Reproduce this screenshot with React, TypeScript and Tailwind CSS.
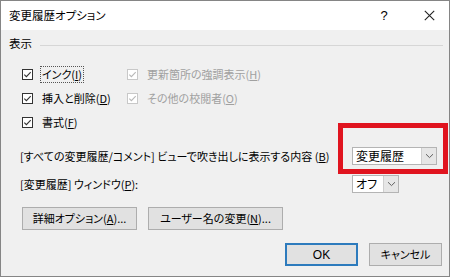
import React from "react";

function Check({ disabled }: { disabled?: boolean }) {
  const border = disabled ? "#c8c8c8" : "#333333";
  const mark = disabled ? "#b8b8b8" : "#333333";
  return (
    <svg width="11" height="11" viewBox="0 0 11 11" className="shrink-0">
      <rect x="0.5" y="0.5" width="10" height="10" fill="#ffffff" stroke={border} />
      <path d="M2.3 5.6 L4.4 7.7 L8.7 3.2" fill="none" stroke={mark} strokeWidth="1.1" />
    </svg>
  );
}

function Chevron() {
  return (
    <svg width="9" height="6" viewBox="0 0 9 6">
      <path d="M1 1.2 L4.5 4.6 L8 1.2" fill="none" stroke="#606060" strokeWidth="1" />
    </svg>
  );
}

function Combo({ text, width }: { text: string; width: string }) {
  return (
    <div className={`${width} h-[18px] bg-white border border-[#b4b4b4] flex items-center`}>
      <span className="pl-[3px] leading-none text-[12px]">{text}</span>
      <div className="ml-auto w-[15px] h-[16px] bg-[#e6e6e6] border-l border-[#cfcfcf] flex items-center justify-center">
        <Chevron />
      </div>
    </div>
  );
}

export default function App() {
  return (
    <div className="w-[451px] h-[278px] bg-white font-['Noto_Sans_CJK_JP',sans-serif] [font-feature-settings:'palt'] text-[11px] text-black">
      <div className="relative w-[450px] h-[277px] border border-[#858585] bg-[#f0f0f0] flex flex-col">
        {/* title bar */}
        <div className="h-[29px] bg-white flex items-center pl-[8px] shrink-0">
          <span className="text-[11.5px]">変更履歴オプション</span>
          <span className="ml-auto text-[13px] font-['Liberation_Sans',sans-serif] w-[10px] text-center">?</span>
          <span className="ml-[34px] mr-[14px] w-[12px] flex items-center justify-center">
            <svg width="11" height="11" viewBox="0 0 11 11">
              <path d="M0.8 0.8 L10.2 10.2 M10.2 0.8 L0.8 10.2" stroke="#222" strokeWidth="1.1" />
            </svg>
          </span>
        </div>

        {/* body */}
        <div className="flex flex-col pt-[6px]">
          <div className="h-[16px] flex items-center pl-[8px] pr-[6px]">
            <span className="text-[11.5px]">表示</span>
            <div className="flex-1 ml-[8px] h-px bg-[#d6d6d6] mt-[2px]" />
          </div>

          <div className="mt-[10px] flex flex-col pl-[21px]">
            <div className="h-[24px] flex items-center">
              <div className="w-[105px] flex items-center">
                <Check />
                <span className="ml-[7px] px-[1px] border border-dotted border-[#555] leading-[15px]">
                  インク(<span className="underline">I</span>)
                </span>
              </div>
              <div className="flex items-center text-[#a0a0a0]">
                <Check disabled />
                <span className="ml-[9px]">
                  更新箇所の強調表示(<span className="underline">H</span>)
                </span>
              </div>
            </div>
            <div className="h-[24px] flex items-center">
              <div className="w-[105px] flex items-center">
                <Check />
                <span className="ml-[9px]">
                  挿入と削除(<span className="underline">D</span>)
                </span>
              </div>
              <div className="flex items-center text-[#a0a0a0]">
                <Check disabled />
                <span className="ml-[9px]">
                  その他の校閲者(<span className="underline">O</span>)
                </span>
              </div>
            </div>
            <div className="h-[24px] flex items-center">
              <Check />
              <span className="ml-[9px]">
                書式(<span className="underline">F</span>)
              </span>
            </div>
          </div>

          <div className="mt-[13px] h-[18px] flex items-center pl-[19px]">
            <span className="w-[332px] whitespace-nowrap">
              [すべての変更履歴/コメント] ビューで吹き出しに表示する内容 (<span className="underline">B</span>)
            </span>
            <Combo text="変更履歴" width="w-[85px]" />
          </div>

          <div className="mt-[10px] h-[18px] flex items-center pl-[19px]">
            <span className="w-[332px] whitespace-nowrap">
              [変更履歴] ウィンドウ(<span className="underline">P</span>):
            </span>
            <Combo text="オフ" width="w-[47px]" />
          </div>

          <div className="mt-[14px] h-[23px] flex items-center pl-[21px] gap-[11px]">
            <button className="w-[115px] h-[23px] bg-[#e1e1e1] border border-[#adadad] flex items-center justify-center">
              詳細オプション(<span className="underline">A</span>)...
            </button>
            <button className="w-[135px] h-[23px] bg-[#e1e1e1] border border-[#adadad] flex items-center justify-center">
              ユーザー名の変更(<span className="underline">N</span>)...
            </button>
          </div>

          <div className="mt-[13px] h-[23px] flex items-center justify-end pr-[7px] gap-[11px]">
            <button className="w-[73px] h-[23px] bg-[#e1e1e1] border-2 border-[#2d7bbd] flex items-center justify-center font-['Liberation_Sans',sans-serif] text-[12px]">
              OK
            </button>
            <button className="w-[73px] h-[23px] bg-[#e1e1e1] border border-[#adadad] flex items-center justify-center">
              キャンセル
            </button>
          </div>
        </div>

        {/* red annotation box */}
        <div className="absolute left-[337px] top-[122px] w-[110px] h-[51px] border-[5px] border-[#e0141f]" />
      </div>
    </div>
  );
}
